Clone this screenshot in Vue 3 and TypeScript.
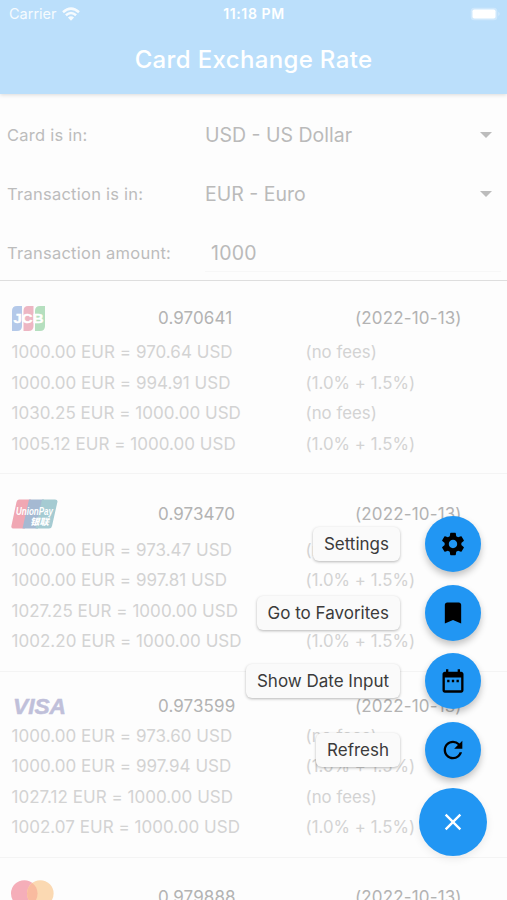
<script setup lang="ts">
interface Line { text: string; fee: string }
interface Provider { id: string; rate: string; head: string; lines: Line[] }

const fees: string[] = ['(no fees)', '(1.0% + 1.5%)', '(no fees)', '(1.0% + 1.5%)']
const withFees = (rows: string[]): Line[] => rows.map((text, i) => ({ text, fee: fees[i] }))

const providers: Provider[] = [
  { id: 'jcb', rate: '0.970641', head: 'h-jcb', lines: withFees(['1000.00 EUR = 970.64 USD', '1000.00 EUR = 994.91 USD', '1030.25 EUR = 1000.00 USD', '1005.12 EUR = 1000.00 USD']) },
  { id: 'unionpay', rate: '0.973470', head: 'h-union', lines: withFees(['1000.00 EUR = 973.47 USD', '1000.00 EUR = 997.81 USD', '1027.25 EUR = 1000.00 USD', '1002.20 EUR = 1000.00 USD']) },
  { id: 'visa', rate: '0.973599', head: 'h-visa', lines: withFees(['1000.00 EUR = 973.60 USD', '1000.00 EUR = 997.94 USD', '1027.12 EUR = 1000.00 USD', '1002.07 EUR = 1000.00 USD']) },
  { id: 'mastercard', rate: '0.979888', head: 'h-master', lines: [] },
]

const actions: { label: string; icon: string }[] = [
  { label: 'Settings', icon: 'M19.14 12.94c.04-.3.06-.61.06-.94 0-.32-.02-.64-.07-.94l2.03-1.58c.18-.14.23-.41.12-.61l-1.92-3.32c-.12-.22-.37-.29-.59-.22l-2.39.96c-.5-.38-1.03-.7-1.62-.94l-.36-2.54c-.04-.24-.24-.41-.48-.41h-3.84c-.24 0-.43.17-.47.41l-.36 2.54c-.59.24-1.13.57-1.62.94l-2.39-.96c-.22-.08-.47 0-.59.22L2.74 8.87c-.12.21-.08.47.12.61l2.03 1.58c-.05.3-.09.63-.09.94s.02.64.07.94l-2.03 1.58c-.18.14-.23.41-.12.61l1.92 3.32c.12.22.37.29.59.22l2.39-.96c.5.38 1.03.7 1.62.94l.36 2.54c.05.24.24.41.48.41h3.84c.24 0 .44-.17.47-.41l.36-2.54c.59-.24 1.13-.56 1.62-.94l2.39.96c.22.08.47 0 .59-.22l1.92-3.32c.12-.22.07-.47-.12-.61l-2.01-1.58zM12 15.6c-1.98 0-3.6-1.62-3.6-3.6s1.62-3.6 3.6-3.6 3.6 1.62 3.6 3.6-1.62 3.6-3.6 3.6z' },
  { label: 'Go to Favorites', icon: 'M17 3H7c-1.1 0-2 .9-2 2v16l7-3 7 3V5c0-1.1-.9-2-2-2z' },
  { label: 'Show Date Input', icon: 'M9 11H7v2h2v-2zm4 0h-2v2h2v-2zm4 0h-2v2h2v-2zm2-7h-1V2h-2v2H8V2H6v2H5c-1.11 0-1.99.9-1.99 2L3 20c0 1.1.89 2 2 2h14c1.1 0 2-.9 2-2V6c0-1.1-.9-2-2-2zm0 16H5V9h14v11z' },
  { label: 'Refresh', icon: 'M17.65 6.35A7.958 7.958 0 0 0 12 4c-4.42 0-7.99 3.58-7.99 8s3.57 8 7.99 8c3.73 0 6.84-2.55 7.73-6h-2.08A5.99 5.99 0 0 1 12 18c-3.31 0-6-2.69-6-6s2.69-6 6-6c1.66 0 3.14.69 4.22 1.78L13 11h7V4l-2.35 2.35z' },
]
</script>

<template>
  <div class="screen">
    <header class="appbar">
      <div class="status">
        <div class="carrier">
          <span>Carrier</span>
          <svg width="18" height="14" viewBox="0 0 18 14" fill="none" stroke="#fff" stroke-width="2.5">
            <path d="M1 5.2Q9-2 17 5.2M3.9 8.2Q9 3.7 14.1 8.2" />
            <path d="M9 13.8 5.9 10.6Q9 8 12.1 10.6Z" fill="#fff" stroke="none" />
          </svg>
        </div>
        <span class="time">11:18 PM</span>
        <div class="power">
          <svg width="31" height="14" viewBox="0 0 31 14">
            <rect x=".7" y=".7" width="26.6" height="12.6" rx="3.5" fill="#fff" opacity=".3" />
            <rect x="2.5" y="2.5" width="23" height="9" rx="1.8" fill="#fff" />
            <path d="M28.5 4.8q2 2.2 0 4.4z" fill="#fff" opacity=".45" />
          </svg>
        </div>
      </div>
      <h1>Card Exchange Rate</h1>
    </header>

    <section class="form">
      <div class="field"><label>Card is in:</label><div class="select"><span>USD - US Dollar</span><i class="caret" /></div></div>
      <div class="field"><label>Transaction is in:</label><div class="select"><span>EUR - Euro</span><i class="caret" /></div></div>
      <div class="field"><label>Transaction amount:</label><div class="select amount"><span>1000</span></div></div>
    </section>

    <section v-for="p in providers" :key="p.id" class="provider">
      <div class="head" :class="p.head">
        <div class="logo">
          <svg v-if="p.id === 'jcb'" width="33" height="25" viewBox="0 0 33 25">
            <path d="M5 0H10V20Q10 25 5 25H0V5Q0 0 5 0Z" fill="#b4c9e9" />
            <path d="M16 0H21.5V20Q21.5 25 16.5 25H11.5V5Q11.5 0 16 0Z" fill="#edb6c3" />
            <path d="M28 0H33V20Q33 25 28 25H23V5Q23 0 28 0Z" fill="#b5dfbf" />
            <text x="1.5" y="17" textLength="30" lengthAdjust="spacingAndGlyphs" class="jcb">JCB</text>
          </svg>
          <svg v-else-if="p.id === 'unionpay'" width="47" height="30" viewBox="0 0 47 30">
            <path d="M8 .5H20L14 29.5H2Q0 29.5.4 27L5.5 3Q6 .5 8 .5Z" fill="#f0a7b3" />
            <path d="M18 .5H33L27 29.5H11.5Z" fill="#a5b9d2" />
            <path d="M31 .5H44Q47 .5 46.4 3L41 27Q40.5 29.5 38 29.5H24.5Z" fill="#a5cbd2" />
            <text x="5" y="15.5" textLength="37" lengthAdjust="spacingAndGlyphs" class="union">UnionPay</text>
            <text x="19" y="25.5" textLength="19" lengthAdjust="spacingAndGlyphs" class="union cjk">银联</text>
          </svg>
          <svg v-else-if="p.id === 'visa'" width="58" height="26" viewBox="0 0 58 26">
            <text x="2" y="21" textLength="53" lengthAdjust="spacingAndGlyphs" class="visa">VISA</text>
          </svg>
          <svg v-else width="43" height="27" viewBox="0 0 43 27">
            <circle cx="13.3" cy="13.5" r="13.3" fill="#f5aeb9" />
            <circle cx="29.3" cy="13.5" r="13.3" fill="#fbd9b2" />
            <path d="M21.3 2.9A13.3 13.3 0 0 1 21.3 24.1A13.3 13.3 0 0 1 21.3 2.9Z" fill="#f9bb9f" />
          </svg>
        </div>
        <span class="rate">{{ p.rate }}</span>
        <span class="date">(2022-10-13)</span>
      </div>
      <div v-for="(line, i) in p.lines" :key="i" class="line">
        <span>{{ line.text }}</span><span class="fee">{{ line.fee }}</span>
      </div>
    </section>

    <nav class="dial">
      <div v-for="a in actions" :key="a.label" class="action">
        <span class="tip">{{ a.label }}</span>
        <button class="fab"><svg width="28" height="28" viewBox="0 0 24 24"><path :d="a.icon" /></svg></button>
      </div>
      <button class="fab main">
        <svg width="28" height="28" viewBox="0 0 24 24" fill="#fff"><path d="M19 6.41 17.59 5 12 10.59 6.41 5 5 6.41 10.59 12 5 17.59 6.41 19 12 13.41 17.59 19 19 17.59 13.41 12z" /></svg>
      </button>
    </nav>
  </div>
</template>

<style>
body { margin: 0; background: #fdfdfd; }
</style>

<style scoped>
* { box-sizing: border-box; }
.screen { position: relative; width: 507px; height: 900px; overflow: hidden; background: #fdfdfd; font-family: Inter, "Liberation Sans", sans-serif; font-size: 17px; }
.appbar { height: 94px; background: #bbdffb; color: #fff; box-shadow: 0 1px 4px rgba(0, 0, 0, .14); }
.status { display: grid; grid-template-columns: 1fr auto 1fr; align-items: center; height: 27px; padding: 0 6px 0 9px; font-size: 14.5px; }
.carrier { display: flex; align-items: center; gap: 5px; opacity: .88; }
.time { margin-left: -2px; font-weight: 600; font-size: 14px; letter-spacing: .6px; }
.power { display: flex; justify-content: flex-end; }
h1 { margin: 0; height: 66px; line-height: 66px; text-align: center; font-size: 24px; font-weight: 500; letter-spacing: .35px; }
.form { height: 187px; padding-top: 11.5px; border-bottom: 1px solid #dedede; }
.field { display: flex; align-items: center; height: 59px; padding: 0 6px 0 7px; color: #bcbcbc; }
label { width: 198px; font-size: 16.5px; letter-spacing: .25px; }
.select { display: flex; flex: 1; align-items: center; justify-content: space-between; height: 59px; padding-right: 9px; font-size: 19.5px; color: #bababa; }
.amount { height: 37px; padding-left: 6px; border-bottom: 1px solid #f7f7f7; letter-spacing: .2px; }
.caret { border: 6px solid transparent; border-top-color: #bcbcbc; border-bottom: 0; }
.provider { padding: 18.5px 0 14px; border-bottom: 1px solid #f4f4f4; }
.head { display: flex; align-items: center; padding-left: 11px; color: #b3b3b3; font-size: 17px; }
.h-jcb { height: 37.5px; }
.h-union { height: 42.3px; }
.h-visa { height: 30.5px; }
.h-master { height: 41px; }
.logo { display: flex; width: 147px; }
.h-jcb .logo { padding-left: 1px; }
.h-master .logo { margin-bottom: 6px; }
.rate { width: 197px; letter-spacing: .1px; }
.date { letter-spacing: .15px; }
.line { display: grid; grid-template-columns: 294px 1fr; height: 30.5px; line-height: 30.5px; padding-left: 11.5px; color: #d3d3d3; font-size: 17px; letter-spacing: .03px; white-space: nowrap; }
.fee { font-size: 16.8px; }
.jcb { font: 700 13px "Liberation Sans", sans-serif; fill: #fff; stroke: #fff; stroke-width: .4px; }
.union { font: italic 700 10px "Liberation Sans", sans-serif; fill: #fff; }
.cjk { font-family: "Noto Sans CJK SC", sans-serif; font-size: 9px; font-weight: 900; }
.visa { font: italic 700 22px "Liberation Sans", sans-serif; fill: #c0c0da; stroke: #c0c0da; stroke-width: .5px; }
.dial { position: absolute; right: 20px; bottom: 44px; display: flex; flex-direction: column; align-items: flex-end; }
.action { display: flex; align-items: center; gap: 25px; height: 56px; margin: 0 6px 12.4px 0; }
.tip { display: flex; align-items: center; height: 34px; padding: 0 11px; border-radius: 6px; background: #fafafa; color: #3b3b3b; box-shadow: 0 1px 3px rgba(0, 0, 0, .28); font-size: 17px; }
.fab { display: flex; align-items: center; justify-content: center; width: 56px; height: 56px; padding: 0; border: 0; border-radius: 50%; background: #2196f3; box-shadow: 0 4px 7px rgba(0, 0, 0, .23); }
.main { width: 68px; height: 68px; margin-top: -2px; box-shadow: 0 3px 8px rgba(0, 0, 0, .08); }
</style>
